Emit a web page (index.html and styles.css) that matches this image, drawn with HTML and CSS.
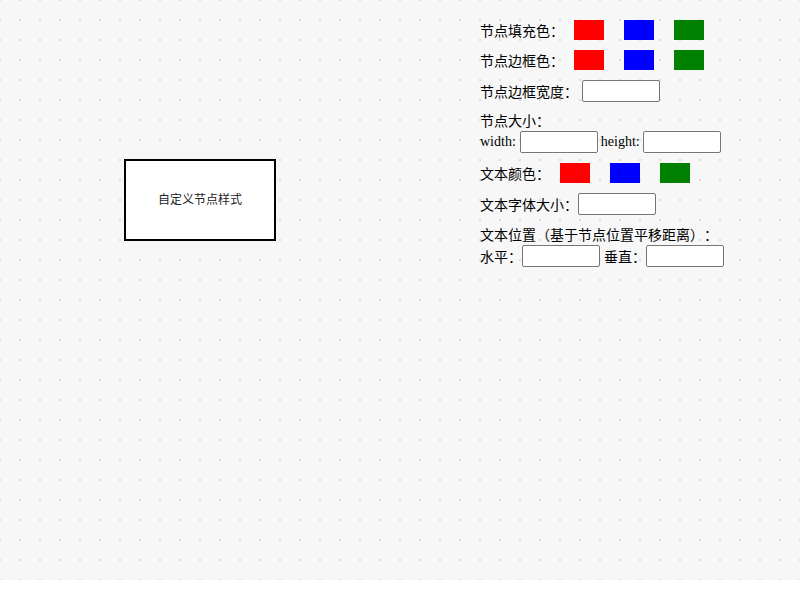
FILE: index.html
```html
<!DOCTYPE html>
<html lang="zh">
<head>
<meta charset="utf-8">
<title>自定义节点样式</title>
<link rel="stylesheet" href="styles.css">
</head>
<body>
<div class="canvas">
  <div class="node"><span>自定义节点样式</span></div>
  <div class="panel">
    <div class="row">
      <span class="label">节点填充色：</span>
      <span class="swatch red"></span>
      <span class="swatch blue"></span>
      <span class="swatch green"></span>
    </div>
    <div class="row">
      <span class="label">节点边框色：</span>
      <span class="swatch red"></span>
      <span class="swatch blue"></span>
      <span class="swatch green"></span>
    </div>
    <div class="row row-input">
      <span class="label">节点边框宽度：</span>
      <input class="field sp" type="text">
    </div>
    <div class="block">
      <div class="line-a">节点大小：</div>
      <div class="line-b">
        <span class="label">width:</span>
        <input class="field sp" type="text">
        <span class="label sp-s">height:</span>
        <input class="field sp-s" type="text">
      </div>
    </div>
    <div class="row">
      <span class="label">文本颜色：</span>
      <span class="swatch red"></span>
      <span class="swatch blue"></span>
      <span class="swatch green"></span>
    </div>
    <div class="row row-input">
      <span class="label">文本字体大小：</span>
      <input class="field" type="text">
    </div>
    <div class="block">
      <div class="line-a line-a-tall">文本位置（基于节点位置平移距离）：</div>
      <div class="line-b">
        <span class="label">水平：</span>
        <input class="field" type="text">
        <span class="label sp">垂直：</span>
        <input class="field" type="text">
      </div>
    </div>
  </div>
</div>
</body>
</html>
```

FILE: styles.css
```css
html, body {
  margin: 0;
  padding: 0;
  background: #ffffff;
}

.canvas {
  position: relative;
  width: 800px;
  height: 580px;
  background-color: #f7f7f7;
  background-image: url("data:image/svg+xml;utf8,<svg xmlns='http://www.w3.org/2000/svg' width='20' height='20'><rect x='9' y='9' width='2' height='2' fill='%23dcdcdc'/></svg>");
  background-position: 10px 10px;
  background-size: 20px 20px;
  overflow: hidden;
}

.node {
  position: absolute;
  left: 124px;
  top: 159px;
  width: 152px;
  height: 82px;
  box-sizing: border-box;
  border: 2px solid #000;
  background: #fff;
  display: flex;
  align-items: center;
  justify-content: center;
  padding-bottom: 4px;
  font-family: "Noto Sans CJK SC", "Noto Sans", sans-serif;
  font-size: 12px;
  color: #222;
}

.panel {
  position: absolute;
  left: 480px;
  top: 20px;
  width: 300px;
  font-family: "Liberation Serif", "Noto Sans CJK SC", serif;
  font-size: 14px;
  color: #000;
  text-spacing-trim: space-all;
  display: flex;
  flex-direction: column;
  gap: 10px;
}

.row {
  display: flex;
  align-items: center;
  height: 20px;
}

.row-input {
  height: 22px;
}

.label {
  white-space: nowrap;
}

.swatch {
  display: block;
  width: 30px;
  height: 20px;
  margin: 0 10px;
}

.red { background: #ff0000; }
.blue { background: #0000ff; }
.green { background: #008000; }

.field {
  display: block;
  width: 78px;
  height: 22px;
  box-sizing: border-box;
  border: 1px solid #767676;
  border-radius: 2px;
  background: #fff;
  padding: 1px 2px;
  margin: 0;
  font-size: 13px;
}

.sp { margin-left: 4px; }
.sp-s { margin-left: 3px; }

.block {
  display: flex;
  flex-direction: column;
}

.line-a {
  height: 19px;
  line-height: 20px;
  white-space: nowrap;
}

.line-a-tall {
  height: 20px;
  line-height: 22px;
}

.line-b {
  display: flex;
  align-items: center;
  height: 22px;
}
```
